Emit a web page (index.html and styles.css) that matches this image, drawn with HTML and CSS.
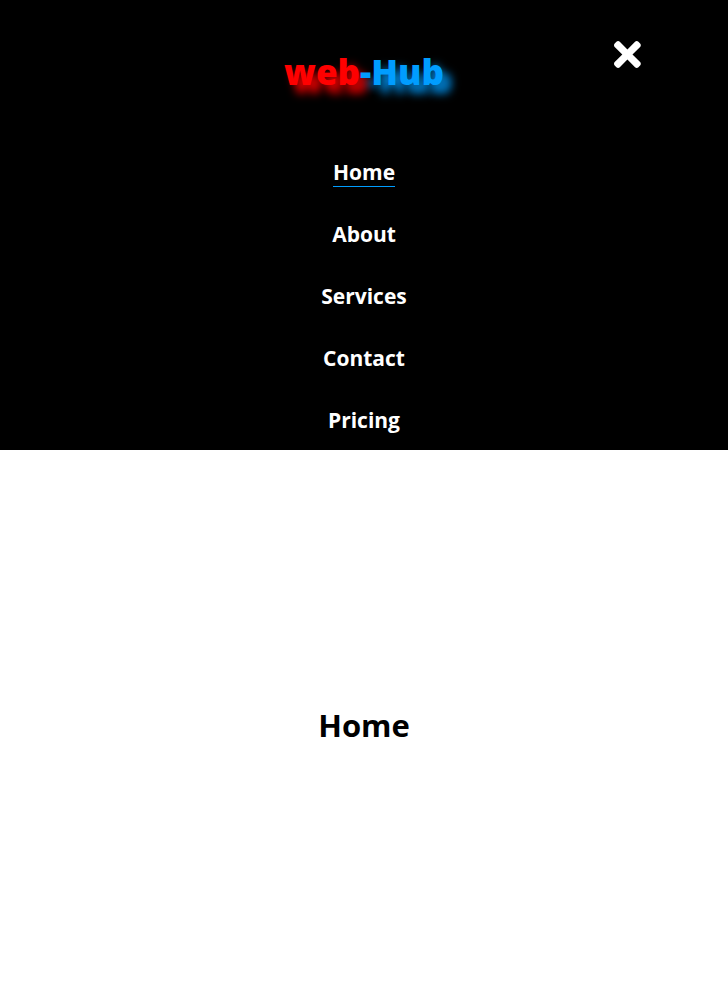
FILE: index.html
```html
<!DOCTYPE html>
<html lang="en">
<head>
<meta charset="utf-8">
<title>web-Hub</title>
<link rel="stylesheet" href="styles.css">
</head>
<body>
<header class="header">
  <a class="logo" href="#home"><span class="logo-web">web</span><span class="logo-hub">-Hub</span></a>
  <button class="close" type="button" aria-label="Close menu">
    <svg viewBox="0 0 352 512" aria-hidden="true"><path d="M242.72 256l100.07-100.07c12.28-12.28 12.28-32.19 0-44.48l-22.24-22.24c-12.28-12.28-32.19-12.28-44.48 0L176 189.28 75.93 89.21c-12.28-12.28-32.19-12.28-44.48 0L9.21 111.45c-12.28 12.28-12.28 32.19 0 44.48L109.28 256 9.21 356.07c-12.28 12.28-12.28 32.19 0 44.48l22.24 22.24c12.28 12.28 32.2 12.28 44.48 0L176 322.72l100.07 100.07c12.28 12.28 32.2 12.28 44.48 0l22.24-22.24c12.28-12.28 12.28-32.19 0-44.48L242.72 256z"/></svg>
  </button>
  <nav class="nav">
    <a class="nav-link active" href="#home">Home</a>
    <a class="nav-link" href="#about">About</a>
    <a class="nav-link" href="#services">Services</a>
    <a class="nav-link" href="#contact">Contact</a>
    <a class="nav-link" href="#pricing">Pricing</a>
  </nav>
</header>
<main class="page" id="home">
  <h1 class="title">Home</h1>
</main>
</body>
</html>
```

FILE: styles.css
```css
* { box-sizing: border-box; }
body {
  margin: 0;
  min-height: 100vh;
  display: flex;
  flex-direction: column;
  background: #fff;
  color: #000;
  font-family: "Segoe UI", "Open Sans", "Noto Sans", sans-serif;
}
.header {
  position: relative;
  display: flex;
  flex-direction: column;
  align-items: center;
  padding: 48px 0 15px;
  background: #000;
}
.logo {
  font-size: 35px;
  line-height: 48px;
  font-weight: 800;
  text-decoration: none;
}
.logo-web { color: #f00; text-shadow: 8px 8px 10px #f00; }
.logo-hub { color: #009dff; text-shadow: 8px 8px 10px #009dff; }
.close {
  position: absolute;
  top: 35px;
  right: 87px;
  padding: 0;
  border: 0;
  background: none;
  color: #fff;
}
.close svg { display: block; height: 39px; fill: currentColor; }
.nav {
  display: flex;
  flex-direction: column;
  align-items: center;
  gap: 34px;
  margin-top: 63px;
}
.nav-link {
  border-bottom: 1px solid transparent;
  color: #fff;
  font-size: 21px;
  line-height: 27px;
  font-weight: 700;
  text-decoration: none;
}
.nav-link.active { border-bottom-color: #009dff; }
.page {
  flex: 1;
  display: flex;
  align-items: center;
  justify-content: center;
  padding-top: 2px;
}
.title {
  margin: 0;
  font-size: 31px;
  line-height: 44px;
  font-weight: 700;
}
```
